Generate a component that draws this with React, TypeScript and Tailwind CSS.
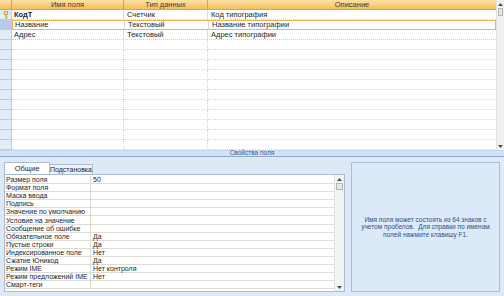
import React from 'react';

const fields = [
  { name: 'КодТ', type: 'Счетчик', desc: 'Код типография', key: true },
  { name: 'Название', type: 'Текстовый', desc: 'Название типографии', selected: true },
  { name: 'Адрес', type: 'Текстовый', desc: 'Адрес типографии' },
];

const props: [string, string][] = [
  ['Размер поля', '50'],
  ['Формат поля', ''],
  ['Маска ввода', ''],
  ['Подпись', ''],
  ['Значение по умолчанию', ''],
  ['Условие на значение', ''],
  ['Сообщение об ошибке', ''],
  ['Обязательное поле', 'Да'],
  ['Пустые строки', 'Да'],
  ['Индексированное поле', 'Нет'],
  ['Сжатие Юникод', 'Да'],
  ['Режим IME', 'Нет контроля'],
  ['Режим предложений IME', 'Нет'],
  ['Смарт-теги', ''],
];

function KeyIcon() {
  return (
    <svg width="6" height="8" viewBox="0 0 6 8">
      <circle cx="3" cy="2" r="1.8" fill="none" stroke="#c9a21a" strokeWidth="1.2" />
      <path d="M3 3.8V7.5M3 6h1.5M3 7.3h1.2" stroke="#c9a21a" strokeWidth="1" fill="none" />
    </svg>
  );
}

function Arrow({ up }: { up?: boolean }) {
  return (
    <div className="h-[8px] flex items-center justify-center">
      <svg width="5" height="3" viewBox="0 0 5 3">
        <path d={up ? 'M0 3L2.5 0L5 3Z' : 'M0 0L2.5 3L5 0Z'} fill="#4d4d4d" />
      </svg>
    </div>
  );
}

export default function App() {
  const emptyRows = Array.from({ length: 11 });
  return (
    <div className="w-[504px] h-[296px] overflow-hidden bg-[#dde9f7] flex flex-col font-['Liberation_Sans',sans-serif] text-[7.5px] leading-none text-[#1e1e1e]">
      {/* table grid */}
      <div className="h-[150px] bg-white flex">
        <div className="flex-1 flex flex-col">
          <div className="h-[10px] flex bg-gradient-to-b from-[#fbe2a6] to-[#f4be58] border-b border-[#e0a43c] text-[#4a3a1c]">
            <div className="w-[12px] border-r border-[#d9a54a]" />
            <div className="w-[112px] flex items-center justify-center border-r border-[#d9a54a]">Имя поля</div>
            <div className="w-[84px] flex items-center justify-center border-r border-[#d9a54a]">Тип данных</div>
            <div className="flex-1 flex items-center justify-center">Описание</div>
          </div>
          {fields.map((f) => (
            <div key={f.name} className="h-[10px] flex">
              <div className={`w-[12px] flex items-center justify-center border-b border-r border-[#b9cce6] ${f.selected ? 'bg-[#b5cbeb]' : 'bg-[#e1ecf9]'}`}>
                {f.key && <KeyIcon />}
              </div>
              <div className={`flex-1 flex ${f.selected ? 'border border-[#f0b550] bg-white' : 'border-b border-dotted border-[#cfcfcf]'}`}>
                <div className={`w-[112px] flex items-center pl-[2px] border-r border-[#dadada] ${f.key ? 'font-bold' : ''}`}>{f.name}</div>
                <div className="w-[84px] flex items-center pl-[3px] border-r border-[#dadada]">{f.type}</div>
                <div className="flex-1 flex items-center pl-[3px]">{f.desc}</div>
              </div>
            </div>
          ))}
          {emptyRows.map((_, i) => (
            <div key={i} className="h-[10px] flex">
              <div className="w-[12px] bg-[#e1ecf9] border-b border-r border-[#b9cce6]" />
              <div className="w-[112px] border-r border-b border-dotted border-[#d6d6d6]" />
              <div className="w-[84px] border-r border-b border-dotted border-[#d6d6d6]" />
              <div className="flex-1 border-b border-dotted border-[#d6d6d6]" />
            </div>
          ))}
        </div>
        <div className="w-[8px] bg-[#f1f1f1] border-l border-[#e2e2e2] flex flex-col">
          <Arrow up />
          <div className="h-[8px] mx-[1px] bg-[#e6e6e6] border border-[#b5b5b5]" />
          <div className="flex-1" />
          <Arrow />
        </div>
      </div>

      {/* section title */}
      <div className="h-[7px] bg-[#d3e3f6] border-t border-[#c4d6ee] border-b border-b-[#8ea9cf] flex items-center justify-center text-[6.5px] text-[#3b5b8f]">
        Свойства поля
      </div>

      {/* properties pane */}
      <div className="flex-1 flex px-[4px] pt-[5px] pb-[4px] gap-[6px]">
        <div className="w-[341px] flex flex-col">
          <div className="h-[12px] flex items-end">
            <div className="w-[46px] h-[12px] bg-white border border-b-0 border-[#a9bcd6] flex items-center justify-center">Общие</div>
            <div className="w-[43px] h-[10px] bg-[#eef3fa] border-t border-r border-[#a9bcd6] flex items-center justify-center text-[7px]">Подстановка</div>
          </div>
          <div className="flex-1 flex bg-white border border-[#a9bcd6] text-[7px]">
            <div className="flex-1 flex flex-col pt-[1px]">
              {props.map(([label, value]) => (
                <div key={label} className="h-[8.1px] flex border-b border-[#dedcd4]">
                  <div className="w-[86px] flex items-center pl-[1px] border-r border-[#dedcd4] whitespace-nowrap overflow-hidden">{label}</div>
                  <div className="flex-1 flex items-center pl-[2px]">{value}</div>
                </div>
              ))}
            </div>
            <div className="w-[10px] bg-[#f3f3f3] border-l border-[#e0e0e0] flex flex-col">
              <Arrow up />
              <div className="h-[7px] mx-[1px] bg-[#e8e8e8] border border-[#b5b5b5]" />
              <div className="flex-1" />
              <Arrow />
            </div>
          </div>
        </div>
        <div className="flex-1 border border-[#a9bdd9] bg-[#dce9f8] flex items-center justify-center px-[6px]">
          <p className="text-center text-[6.5px] leading-[7.5px] text-[#30508a]">
            Имя поля может состоять из 64 знаков с учетом пробелов.&nbsp; Для справки по именам полей нажмите клавишу F1.
          </p>
        </div>
      </div>
    </div>
  );
}
